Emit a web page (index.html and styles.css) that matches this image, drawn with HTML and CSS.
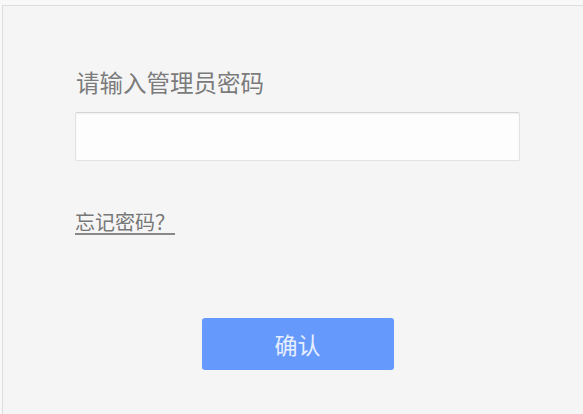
FILE: index.html
```html
<!DOCTYPE html>
<html lang="zh-CN">
<head>
<meta charset="utf-8">
<title>登录</title>
<link rel="stylesheet" href="styles.css">
</head>
<body>
<div class="card">
  <form class="login">
    <label class="label" for="pwd">请输入管理员密码</label>
    <input class="pwd" id="pwd" type="password">
    <a class="forgot" href="#">忘记密码？</a>
    <div class="actions">
      <button class="confirm" type="button">确认</button>
    </div>
  </form>
</div>
</body>
</html>
```
FILE: styles.css
```css
html, body {
  margin: 0;
  padding: 0;
  height: 100%;
}
body {
  background: #f8f8f8;
  font-family: "Noto Sans CJK SC", "Noto Sans", sans-serif;
  overflow: hidden;
}
.card {
  margin: 5px 0 0 2px;
  height: calc(100% - 5px);
  box-sizing: border-box;
  border-top: 1px solid #dedede;
  border-left: 1px solid #dedede;
  background: #f5f5f5;
  padding: 64px 0 0 72px;
}
.login {
  width: 445px;
  display: flex;
  flex-direction: column;
  align-items: flex-start;
}
.label {
  font-size: 23.5px;
  line-height: 24px;
  color: #7b7b7b;
  padding-left: 1px;
}
.pwd {
  margin-top: 18px;
  width: 445px;
  height: 49px;
  box-sizing: border-box;
  border: 1px solid #e2e2e2;
  border-top-color: #d4d4d4;
  border-radius: 2px;
  background: #fdfdfd;
  box-shadow: inset 0 1px 2px rgba(0,0,0,0.06);
  outline: none;
}
.forgot {
  margin-top: 51px;
  font-size: 20px;
  line-height: 20px;
  color: #777;
  text-decoration: underline;
  text-underline-offset: 3px;
  text-decoration-color: #888;
}
.actions {
  align-self: stretch;
  display: flex;
  justify-content: center;
  margin-top: 86px;
}
.confirm {
  width: 192px;
  height: 52px;
  border: none;
  border-radius: 3px;
  background: #6699fc;
  color: #e6efff;
  font-family: "Noto Sans CJK SC", "Noto Sans", sans-serif;
  font-size: 23px;
  line-height: 52px;
  padding: 0;
}
```
